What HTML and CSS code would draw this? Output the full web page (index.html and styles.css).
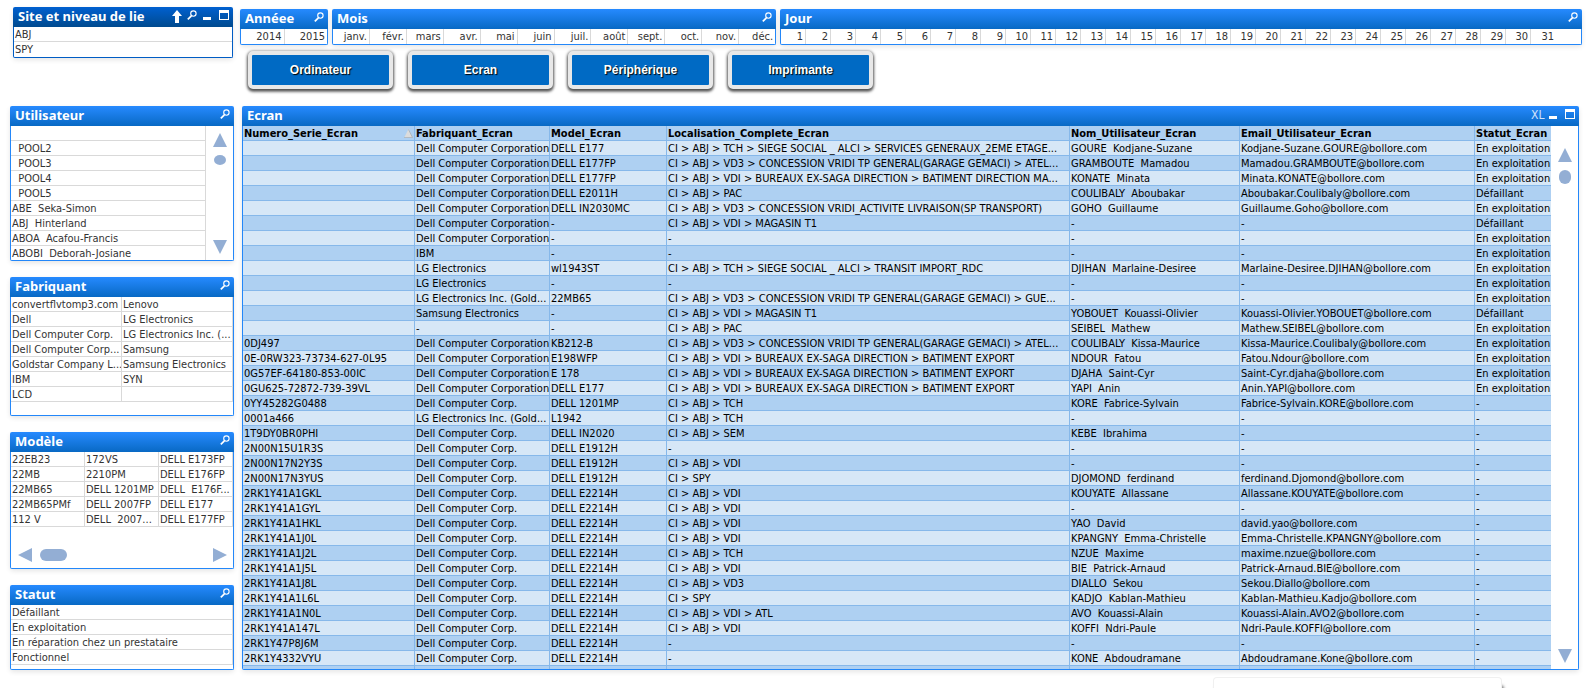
FILE: index.html
```html
<!DOCTYPE html>
<html lang="fr">
<head>
<meta charset="utf-8">
<title>Parc informatique - Ecran</title>
<link rel="stylesheet" href="styles.css">
</head>
<body>
<svg class="defs" aria-hidden="true">
  <symbol id="search" viewBox="0 0 10 10"><circle cx="6.4" cy="3.6" r="2.7" fill="none" stroke="#fff" stroke-width="1.1"/><path d="M4.4 5.8 0.8 9.3" stroke="#fff" stroke-width="1.7"/></symbol>
  <symbol id="clear" viewBox="0 0 10 13"><path d="M5 0 10 6H7v7H3V6H0z" fill="#fff"/></symbol>
  <symbol id="min" viewBox="0 0 10 10"><path d="M1 7h8v3H1z" fill="#fff"/></symbol>
  <symbol id="max" viewBox="0 0 10 10"><path d="M0 0h10v10H0zM1 3v6h8V3z" fill="#fff" fill-rule="evenodd"/></symbol>
  <symbol id="up" viewBox="0 0 14 14"><path d="M7 0 14 14H0z" fill="#93aed4"/></symbol>
  <symbol id="down" viewBox="0 0 14 14"><path d="M0 0h14L7 14z" fill="#93aed4"/></symbol>
  <symbol id="left" viewBox="0 0 14 14"><path d="M14 0v14L0 7z" fill="#93aed4"/></symbol>
  <symbol id="right" viewBox="0 0 14 14"><path d="M0 0 14 7 0 14z" fill="#93aed4"/></symbol>
</svg>
<div class="page">
  <header class="top">
    <section class="panel panel-active site">
      <div class="caption"><h2>Site et niveau de lie</h2>
        <button class="icon icon-tall" aria-label="Effacer"><svg><use href="#clear"/></svg></button>
        <button class="icon" aria-label="Rechercher"><svg><use href="#search"/></svg></button>
        <button class="icon" aria-label="Réduire"><svg><use href="#min"/></svg></button>
        <button class="icon icon-max" aria-label="Agrandir"><svg><use href="#max"/></svg></button>
      </div>
      <ul class="body rows site-rows"><li>ABJ</li><li>SPY</li></ul>
    </section>
    <div class="selectors">
      <div class="periods">
        <section class="panel">
          <div class="caption"><h2>Annéee</h2><button class="icon" aria-label="Rechercher"><svg><use href="#search"/></svg></button></div>
          <ul class="body strip"><li>2014</li><li>2015</li></ul>
        </section>
        <section class="panel">
          <div class="caption"><h2>Mois</h2><button class="icon" aria-label="Rechercher"><svg><use href="#search"/></svg></button></div>
          <ul class="body strip"><li>janv.</li><li>févr.</li><li>mars</li><li>avr.</li><li>mai</li><li>juin</li><li>juil.</li><li>août</li><li>sept.</li><li>oct.</li><li>nov.</li><li>déc.</li></ul>
        </section>
        <section class="panel">
          <div class="caption"><h2>Jour</h2><button class="icon" aria-label="Rechercher"><svg><use href="#search"/></svg></button></div>
          <ul class="body strip days"><li>1</li><li>2</li><li>3</li><li>4</li><li>5</li><li>6</li><li>7</li><li>8</li><li>9</li><li>10</li><li>11</li><li>12</li><li>13</li><li>14</li><li>15</li><li>16</li><li>17</li><li>18</li><li>19</li><li>20</li><li>21</li><li>22</li><li>23</li><li>24</li><li>25</li><li>26</li><li>27</li><li>28</li><li>29</li><li>30</li><li>31</li></ul>
        </section>
      </div>
      <nav class="nav">
        <button>Ordinateur</button><button>Ecran</button><button>Périphérique</button><button>Imprimante</button>
      </nav>
    </div>
  </header>
  <main class="main">
    <aside class="side">
      <section class="panel">
        <div class="caption"><h2>Utilisateur</h2><button class="icon" aria-label="Rechercher"><svg><use href="#search"/></svg></button></div>
        <div class="body scroller">
          <ul class="rows users"><li></li><li>  POOL2</li><li>  POOL3</li><li>  POOL4</li><li>  POOL5</li><li>ABE  Seka-Simon</li><li>ABJ  Hinterland</li><li>ABOA  Acafou-Francis</li><li>ABOBI  Deborah-Josiane</li></ul>
          <div class="vbar"><svg class="arrow"><use href="#up"/></svg><span class="thumb thumb-flat"></span><svg class="arrow arrow-end"><use href="#down"/></svg></div>
        </div>
      </section>
      <section class="panel">
        <div class="caption"><h2>Fabriquant</h2><button class="icon" aria-label="Rechercher"><svg><use href="#search"/></svg></button></div>
        <div class="body makers-body">
          <ul class="rows grid makers"><li>convertflvtomp3.com</li><li>Dell</li><li>Dell Computer Corp.</li><li>Dell Computer Corp...</li><li>Goldstar Company L...</li><li>IBM</li><li>LCD</li><li>Lenovo</li><li>LG Electronics</li><li>LG Electronics Inc. (...</li><li>Samsung</li><li>Samsung Electronics</li><li>SYN</li><li></li></ul>
        </div>
      </section>
      <section class="panel">
        <div class="caption"><h2>Modèle</h2><button class="icon" aria-label="Rechercher"><svg><use href="#search"/></svg></button></div>
        <div class="body">
          <ul class="rows grid models"><li>22EB23</li><li>22MB</li><li>22MB65</li><li>22MB65PMf</li><li>112 V</li><li>172VS</li><li>2210PM</li><li>DELL 1201MP</li><li>DELL 2007FP</li><li>DELL  2007...</li><li>DELL E173FP</li><li>DELL E176FP</li><li>DELL  E176F...</li><li>DELL E177</li><li>DELL E177FP</li></ul>
          <div class="hbar"><svg class="arrow"><use href="#left"/></svg><span class="thumb thumb-wide"></span><svg class="arrow arrow-right"><use href="#right"/></svg></div>
        </div>
      </section>
      <section class="panel">
        <div class="caption"><h2>Statut</h2><button class="icon" aria-label="Rechercher"><svg><use href="#search"/></svg></button></div>
        <div class="body status-body">
          <ul class="rows grid"><li>Défaillant</li><li>En exploitation</li><li>En réparation chez un prestataire</li><li>Fonctionnel</li></ul>
        </div>
      </section>
    </aside>
    <section class="panel screens">
      <div class="caption"><h2>Ecran</h2>
        <button class="icon xl" aria-label="Exporter vers Excel">XL</button>
        <button class="icon" aria-label="Réduire"><svg><use href="#min"/></svg></button>
        <button class="icon icon-max" aria-label="Agrandir"><svg><use href="#max"/></svg></button>
      </div>
      <div class="body scroller">
        <div class="table-area">
        <table>
          <colgroup><col class="c-serial"><col class="c-maker"><col class="c-model"><col><col class="c-name"><col class="c-mail"><col class="c-status"></colgroup>
          <thead><tr><th>Numero_Serie_Ecran<svg class="sort" viewBox="0 0 9 9"><path d="M4.5 0 9 9H0z" fill="#dcdcdc"/><path d="M4.5 0.5 8.6 8.6H0" fill="none" stroke="#a9b2bc" stroke-width="0.9"/></svg></th><th>Fabriquant_Ecran</th><th>Model_Ecran</th><th>Localisation_Complete_Ecran</th><th>Nom_Utilisateur_Ecran</th><th>Email_Utilisateur_Ecran</th><th>Statut_Ecran</th></tr></thead>
          <tbody>
          <tr><td></td><td>Dell Computer Corporation</td><td>DELL E177</td><td>CI > ABJ > TCH > SIEGE SOCIAL _ ALCI > SERVICES GENERAUX_2EME ETAGE...</td><td>GOURE  Kodjane-Suzane</td><td>Kodjane-Suzane.GOURE@bollore.com</td><td>En exploitation</td></tr>
          <tr><td></td><td>Dell Computer Corporation</td><td>DELL E177FP</td><td>CI > ABJ > VD3 > CONCESSION VRIDI TP GENERAL(GARAGE GEMACI) > ATEL...</td><td>GRAMBOUTE  Mamadou</td><td>Mamadou.GRAMBOUTE@bollore.com</td><td>En exploitation</td></tr>
          <tr><td></td><td>Dell Computer Corporation</td><td>DELL E177FP</td><td>CI > ABJ > VDI > BUREAUX EX-SAGA DIRECTION > BATIMENT DIRECTION MA...</td><td>KONATE  Minata</td><td>Minata.KONATE@bollore.com</td><td>En exploitation</td></tr>
          <tr><td></td><td>Dell Computer Corporation</td><td>DELL E2011H</td><td>CI > ABJ > PAC</td><td>COULIBALY  Aboubakar</td><td>Aboubakar.Coulibaly@bollore.com</td><td>Défaillant</td></tr>
          <tr><td></td><td>Dell Computer Corporation</td><td>DELL IN2030MC</td><td>CI > ABJ > VD3 > CONCESSION VRIDI_ACTIVITE LIVRAISON(SP TRANSPORT)</td><td>GOHO  Guillaume</td><td>Guillaume.Goho@bollore.com</td><td>En exploitation</td></tr>
          <tr><td></td><td>Dell Computer Corporation</td><td>-</td><td>CI > ABJ > VDI > MAGASIN T1</td><td>-</td><td>-</td><td>Défaillant</td></tr>
          <tr><td></td><td>Dell Computer Corporation</td><td>-</td><td>-</td><td>-</td><td>-</td><td>En exploitation</td></tr>
          <tr><td></td><td>IBM</td><td>-</td><td>-</td><td>-</td><td>-</td><td>En exploitation</td></tr>
          <tr><td></td><td>LG Electronics</td><td>wl1943ST</td><td>CI > ABJ > TCH > SIEGE SOCIAL _ ALCI > TRANSIT IMPORT_RDC</td><td>DJIHAN  Marlaine-Desiree</td><td>Marlaine-Desiree.DJIHAN@bollore.com</td><td>En exploitation</td></tr>
          <tr><td></td><td>LG Electronics</td><td>-</td><td>-</td><td>-</td><td>-</td><td>En exploitation</td></tr>
          <tr><td></td><td>LG Electronics Inc. (Gold...</td><td>22MB65</td><td>CI > ABJ > VD3 > CONCESSION VRIDI TP GENERAL(GARAGE GEMACI) > GUE...</td><td>-</td><td>-</td><td>En exploitation</td></tr>
          <tr><td></td><td>Samsung Electronics</td><td>-</td><td>CI > ABJ > VDI > MAGASIN T1</td><td>YOBOUET  Kouassi-Olivier</td><td>Kouassi-Olivier.YOBOUET@bollore.com</td><td>Défaillant</td></tr>
          <tr><td></td><td>-</td><td>-</td><td>CI > ABJ > PAC</td><td>SEIBEL  Mathew</td><td>Mathew.SEIBEL@bollore.com</td><td>En exploitation</td></tr>
          <tr><td>0DJ497</td><td>Dell Computer Corporation</td><td>KB212-B</td><td>CI > ABJ > VD3 > CONCESSION VRIDI TP GENERAL(GARAGE GEMACI) > ATEL...</td><td>COULIBALY  Kissa-Maurice</td><td>Kissa-Maurice.Coulibaly@bollore.com</td><td>En exploitation</td></tr>
          <tr><td>0E-0RW323-73734-627-0L95</td><td>Dell Computer Corporation</td><td>E198WFP</td><td>CI > ABJ > VDI > BUREAUX EX-SAGA DIRECTION > BATIMENT EXPORT</td><td>NDOUR  Fatou</td><td>Fatou.Ndour@bollore.com</td><td>En exploitation</td></tr>
          <tr><td>0G57EF-64180-853-00IC</td><td>Dell Computer Corporation</td><td>E 178</td><td>CI > ABJ > VDI > BUREAUX EX-SAGA DIRECTION > BATIMENT EXPORT</td><td>DJAHA  Saint-Cyr</td><td>Saint-Cyr.djaha@bollore.com</td><td>En exploitation</td></tr>
          <tr><td>0GU625-72872-739-39VL</td><td>Dell Computer Corporation</td><td>DELL E177</td><td>CI > ABJ > VDI > BUREAUX EX-SAGA DIRECTION > BATIMENT EXPORT</td><td>YAPI  Anin</td><td>Anin.YAPI@bollore.com</td><td>En exploitation</td></tr>
          <tr><td>0YY45282G0488</td><td>Dell Computer Corp.</td><td>DELL 1201MP</td><td>CI > ABJ > TCH</td><td>KORE  Fabrice-Sylvain</td><td>Fabrice-Sylvain.KORE@bollore.com</td><td>-</td></tr>
          <tr><td>0001a466</td><td>LG Electronics Inc. (Gold...</td><td>L1942</td><td>CI > ABJ > TCH</td><td>-</td><td>-</td><td>-</td></tr>
          <tr><td>1T9DY0BR0PHI</td><td>Dell Computer Corp.</td><td>DELL IN2020</td><td>CI > ABJ > SEM</td><td>KEBE  Ibrahima</td><td>-</td><td>-</td></tr>
          <tr><td>2N00N15U1R3S</td><td>Dell Computer Corp.</td><td>DELL E1912H</td><td>-</td><td>-</td><td>-</td><td>-</td></tr>
          <tr><td>2N00N17N2Y3S</td><td>Dell Computer Corp.</td><td>DELL E1912H</td><td>CI > ABJ > VDI</td><td>-</td><td>-</td><td>-</td></tr>
          <tr><td>2N00N17N3YUS</td><td>Dell Computer Corp.</td><td>DELL E1912H</td><td>CI > SPY</td><td>DJOMOND  ferdinand</td><td>ferdinand.Djomond@bollore.com</td><td>-</td></tr>
          <tr><td>2RK1Y41A1GKL</td><td>Dell Computer Corp.</td><td>DELL E2214H</td><td>CI > ABJ > VDI</td><td>KOUYATE  Allassane</td><td>Allassane.KOUYATE@bollore.com</td><td>-</td></tr>
          <tr><td>2RK1Y41A1GYL</td><td>Dell Computer Corp.</td><td>DELL E2214H</td><td>CI > ABJ > VDI</td><td>-</td><td>-</td><td>-</td></tr>
          <tr><td>2RK1Y41A1HKL</td><td>Dell Computer Corp.</td><td>DELL E2214H</td><td>CI > ABJ > VDI</td><td>YAO  David</td><td>david.yao@bollore.com</td><td>-</td></tr>
          <tr><td>2RK1Y41A1J0L</td><td>Dell Computer Corp.</td><td>DELL E2214H</td><td>CI > ABJ > VDI</td><td>KPANGNY  Emma-Christelle</td><td>Emma-Christelle.KPANGNY@bollore.com</td><td>-</td></tr>
          <tr><td>2RK1Y41A1J2L</td><td>Dell Computer Corp.</td><td>DELL E2214H</td><td>CI > ABJ > TCH</td><td>NZUE  Maxime</td><td>maxime.nzue@bollore.com</td><td>-</td></tr>
          <tr><td>2RK1Y41A1J5L</td><td>Dell Computer Corp.</td><td>DELL E2214H</td><td>CI > ABJ > VDI</td><td>BIE  Patrick-Arnaud</td><td>Patrick-Arnaud.BIE@bollore.com</td><td>-</td></tr>
          <tr><td>2RK1Y41A1J8L</td><td>Dell Computer Corp.</td><td>DELL E2214H</td><td>CI > ABJ > VD3</td><td>DIALLO  Sekou</td><td>Sekou.Diallo@bollore.com</td><td>-</td></tr>
          <tr><td>2RK1Y41A1L6L</td><td>Dell Computer Corp.</td><td>DELL E2214H</td><td>CI > SPY</td><td>KADJO  Kablan-Mathieu</td><td>Kablan-Mathieu.Kadjo@bollore.com</td><td>-</td></tr>
          <tr><td>2RK1Y41A1N0L</td><td>Dell Computer Corp.</td><td>DELL E2214H</td><td>CI > ABJ > VDI > ATL</td><td>AVO  Kouassi-Alain</td><td>Kouassi-Alain.AVO2@bollore.com</td><td>-</td></tr>
          <tr><td>2RK1Y41A147L</td><td>Dell Computer Corp.</td><td>DELL E2214H</td><td>CI > ABJ > VDI</td><td>KOFFI  Ndri-Paule</td><td>Ndri-Paule.KOFFI@bollore.com</td><td>-</td></tr>
          <tr><td>2RK1Y47P8J6M</td><td>Dell Computer Corp.</td><td>DELL E2214H</td><td>-</td><td>-</td><td>-</td><td>-</td></tr>
          <tr><td>2RK1Y4332VYU</td><td>Dell Computer Corp.</td><td>DELL E2214H</td><td>-</td><td>KONE  Abdoudramane</td><td>Abdoudramane.Kone@bollore.com</td><td>-</td></tr>
          <tr><td></td><td>Dell Computer Corp.</td><td></td><td></td><td></td><td></td><td></td></tr>
          </tbody>
        </table>
        </div>
        <div class="vbar vbar-tall"><svg class="arrow"><use href="#up"/></svg><span class="thumb"></span><svg class="arrow arrow-end"><use href="#down"/></svg></div>
      </div>
    </section>
  </main>
  <div class="next-box"></div>
</div>
</body>
</html>
```
FILE: styles.css
```css
* { box-sizing: border-box; }

body {
  margin: 0;
  background: #fff;
  color: #333;
  font: 11px/12px "DejaVu Sans Condensed", "DejaVu Sans", sans-serif;
}

ul { margin: 0; padding: 0; list-style: none; }
.defs { display: none; }

.page { padding: 7px 4px 0 10px; overflow: hidden; }

/* Panels */
.panel {
  display: flex;
  flex-direction: column;
  min-width: 0;
  border-radius: 3px;
  box-shadow: 0 2px 5px rgba(0, 0, 0, 0.1);
}

.caption {
  display: flex;
  flex: none;
  align-items: flex-start;
  gap: 5px;
  height: 20px;
  padding: 3px 4px 0 5px;
  border-radius: 2px 2px 0 0;
  background: linear-gradient(#268aff, #0869c4);
}

.caption h2 {
  flex: 1;
  margin: 0;
  color: #fff;
  font: bold 13px/12px "Noto Sans", sans-serif;
  white-space: nowrap;
}

.icon {
  flex: none;
  width: 10px;
  height: 10px;
  padding: 0;
  border: 0;
  background: none;
  color: #cfe2fa;
}

.icon svg { display: block; width: 100%; height: 100%; }
.icon-tall { height: 13px; }
.icon-max { margin-left: 2px; }

.xl { width: 12px; font: 12px/12px "DejaVu Sans Condensed", sans-serif; }

.body {
  border: solid #2387f9;
  border-width: 0 1px 1px;
  border-radius: 0 0 2px 2px;
  background: #fff;
}

.panel-active .caption { background: linear-gradient(#0060d0, #004a8e); }
.panel-active .body { border-color: #005cc4; }

.rows li {
  height: 15px;
  padding: 2px 0 0 1px;
  border-bottom: 1px solid #d9d9d9;
  white-space: pre;
  overflow: hidden;
}

/* Top selectors */
.top { display: flex; gap: 7px; padding-left: 3px; }
.site { flex: none; align-self: flex-start; width: 220px; }
.site-rows { padding-bottom: 1px; }
.site-rows li:last-child, .users li:last-child { height: 14px; border-bottom: 0; }

.selectors { flex: 1; min-width: 0; padding-top: 2px; }

.periods { display: grid; grid-template-columns: 88px 444fr 802fr; gap: 4px; }

.strip { display: flex; }

.strip li {
  flex: 1 1 0;
  min-width: 0;
  height: 15px;
  padding: 2px 2px 0 0;
  border-right: 1px solid #d9d9d9;
  text-align: right;
}

.strip li:last-child { border-right: 0; }
.days { display: grid; grid-template-columns: repeat(32, 1fr); }

.nav { display: flex; gap: 15px; padding: 6px 0 17px 8px; }

.nav button {
  width: 145px;
  height: 38px;
  padding: 0;
  border: 4px solid #e8e8e8;
  border-radius: 5px;
  background: #006ac4;
  box-shadow: 0 1px 3px 1px rgba(0, 0, 0, 0.55), 0 3px 3px rgba(0, 0, 0, 0.35);
  color: #fff;
  font: bold 12px/14px "Liberation Sans", Arial, sans-serif;
  text-shadow: 1px 1px 1px #000;
}

/* Main area */
.main { display: grid; grid-template-columns: 224px 1fr; gap: 8px; padding-right: 3px; }
.side { display: flex; flex-direction: column; gap: 16px; }

.scroller { display: flex; }
.users { flex: 1; border-right: 1px solid #d9d9d9; }

.grid { display: grid; }
.grid li { border-right: 1px solid #d9d9d9; }
.makers { grid-template: repeat(7, 15px) / 1fr 1fr; grid-auto-flow: column; }
.models { grid-template: repeat(5, 15px) / repeat(3, 1fr); grid-auto-flow: column; }
.makers-body { padding-bottom: 13px; }
.status-body { padding-bottom: 4px; }

.vbar {
  display: flex;
  flex: none;
  flex-direction: column;
  align-items: center;
  gap: 8px;
  width: 27px;
  padding: 7px 0 6px;
}

.vbar-tall { padding-top: 22px; }

.hbar { display: flex; align-items: center; gap: 8px; height: 41px; padding: 14px 6px 0 7px; }

.arrow { flex: none; width: 14px; height: 14px; }
.arrow-end { margin-top: auto; }
.arrow-right { margin-left: auto; }

.thumb { width: 12px; height: 14px; border-radius: 6px; background: #93aed4; }
.thumb-flat { height: 10px; border-radius: 50%; }
.thumb-wide { width: 27px; height: 12px; }

.screens { height: 0; min-height: 100%; }
.screens > .body { flex: 1; min-height: 0; }
.table-area { flex: 1; min-width: 0; overflow: hidden; }

table { width: 100%; table-layout: fixed; border-collapse: separate; border-spacing: 0; color: #000; }

th, td {
  height: 15px;
  padding: 2px 0 0 1px;
  border: solid #86b8ea;
  border-width: 0 1px 1px 0;
  background: #aed0f2;
  line-height: 12px;
  text-align: left;
  white-space: pre;
  overflow: hidden;
}

th:last-child, td:last-child { border-right: 0; }
tbody tr:nth-child(odd) td { background: #d6e7f7; }

.sort { float: right; width: 9px; height: 9px; margin: 1px 1px 0 0; }

.c-serial { width: 172px; }
.c-maker { width: 135px; }
.c-model { width: 117px; }
.c-name { width: 170px; }
.c-mail { width: 235px; }
.c-status { width: 76px; }

.next-box {
  width: 289px;
  height: 11px;
  margin: 7px 80px 0 auto;
  border: 1px solid #f0f0f0;
  border-bottom: 0;
  border-radius: 4px 4px 0 0;
  box-shadow: 2px 8px 3px rgba(0, 0, 0, 0.5);
}
```
